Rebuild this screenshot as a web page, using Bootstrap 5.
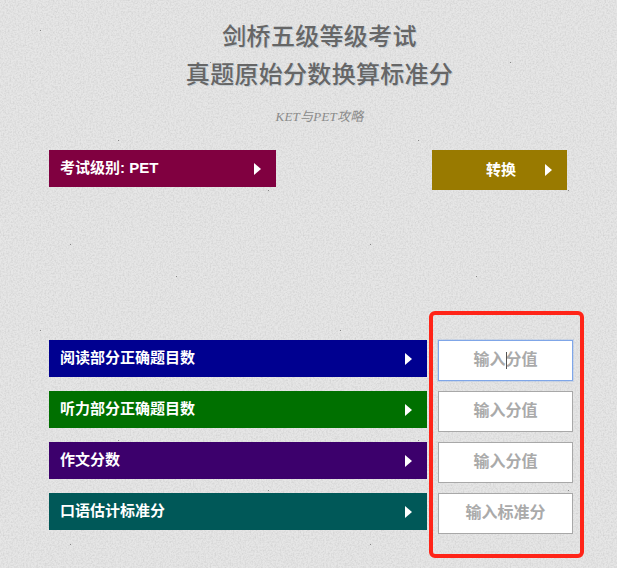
<!DOCTYPE html>
<html lang="zh">
<head>
<meta charset="utf-8">
<title>剑桥五级等级考试</title>
<link href="https://cdn.jsdelivr.net/npm/bootstrap@5.3.0/dist/css/bootstrap.min.css" rel="stylesheet">
<style>
html,body{height:568px;overflow:hidden}
body{background-color:#e6e6e6;background-image:url("data:image/svg+xml,%3Csvg xmlns='http://www.w3.org/2000/svg' width='300' height='300'%3E%3Cfilter id='n'%3E%3CfeTurbulence type='fractalNoise' baseFrequency='.6' numOctaves='3' seed='4'/%3E%3CfeColorMatrix values='0 0 0 0 .4 0 0 0 0 .4 0 0 0 0 .4 .6 0 0 0 -.22'/%3E%3C/filter%3E%3Crect width='300' height='300' filter='url(%23n)'/%3E%3Cg fill='%23888'%3E%3Crect x='40' y='30' width='1' height='1'/%3E%3Crect x='210' y='62' width='1' height='1'/%3E%3Crect x='118' y='140' width='1' height='1'/%3E%3Crect x='268' y='190' width='1' height='1'/%3E%3Crect x='70' y='244' width='1' height='1'/%3E%3Crect x='176' y='276' width='1' height='1'/%3E%3C/g%3E%3C/svg%3E");font-family:"Liberation Sans","Noto Sans CJK SC",sans-serif}
.sheet{position:relative;width:617px;height:568px;padding:18px 27px 0 49px}
.heading{height:132px;text-align:center;font-family:"Liberation Serif","Noto Sans CJK SC",serif}
.heading h1{margin:0;font-size:24px;line-height:38px;font-weight:500;color:#666;letter-spacing:.3px;text-shadow:1px 1px 0 #c4ccd2}
.heading p{margin:14px 0 0;font-size:13px;line-height:18px;font-style:italic;color:#8a8a8a;letter-spacing:.2px}
.tag{display:flex;align-items:center;justify-content:space-between;height:37px;padding:0 15px 2px 11px;color:#fff;font-size:15px;font-weight:700;line-height:1}
.arrow{width:0;height:0;border-style:solid;border-width:6px 0 6px 7px;border-color:transparent transparent transparent #fff;flex:none;margin-top:2px}
.level{width:227px;background:#800040}
.go{width:135px;height:40px;margin-left:156px;background:#997a00;border:0;border-radius:0;padding:0 15px 2px 54px}
.top-row{height:190px}
.fill-row{margin-bottom:10px}
.bar{width:378px;margin-right:11px}
.bar-blue{background:#000090}
.bar-green{background:#007000}
.bar-purple{background:#3c006c}
.bar-teal{background:#005858}
.score{width:135px;height:41px;border:1px solid #a8a8a8;border-radius:0;padding:0 0 1px;text-align:center;font-size:16px;font-weight:700;background:#fff;font-family:"Liberation Sans","Noto Sans CJK SC",sans-serif}
.score::placeholder{color:#aaa;opacity:1}
.score-on{border:1px solid #7fa6e8;box-shadow:0 0 0 1px rgba(127,166,232,.25)}
.caret-mark{position:absolute;left:506px;top:352px;width:1px;height:17px;background:#555}
.callout{position:absolute;left:429px;top:311px;width:155px;height:247px;border:4px solid #ff2418;border-radius:6px;pointer-events:none}
</style>
</head>
<body>
<main class="sheet">
  <header class="heading">
    <h1>剑桥五级等级考试</h1>
    <h1>真题原始分数换算标准分</h1>
    <p>KET与PET攻略</p>
  </header>
  <div class="top-row d-flex align-items-start">
    <div class="tag level"><span>考试级别: PET</span><i class="arrow"></i></div>
    <button type="button" class="btn tag go"><span>转换</span><i class="arrow"></i></button>
  </div>
  <div class="d-flex align-items-start fill-row">
    <div class="tag bar bar-blue"><span>阅读部分正确题目数</span><i class="arrow"></i></div>
    <input class="form-control score score-on" placeholder="输入分值">
  </div>
  <div class="d-flex align-items-start fill-row">
    <div class="tag bar bar-green"><span>听力部分正确题目数</span><i class="arrow"></i></div>
    <input class="form-control score" placeholder="输入分值">
  </div>
  <div class="d-flex align-items-start fill-row">
    <div class="tag bar bar-purple"><span>作文分数</span><i class="arrow"></i></div>
    <input class="form-control score" placeholder="输入分值">
  </div>
  <div class="d-flex align-items-start fill-row">
    <div class="tag bar bar-teal"><span>口语估计标准分</span><i class="arrow"></i></div>
    <input class="form-control score" placeholder="输入标准分">
  </div>
  <span class="caret-mark"></span>
  <div class="callout"></div>
</main>
<script src="https://cdn.jsdelivr.net/npm/bootstrap@5.3.0/dist/js/bootstrap.bundle.min.js"></script>
</body>
</html>
